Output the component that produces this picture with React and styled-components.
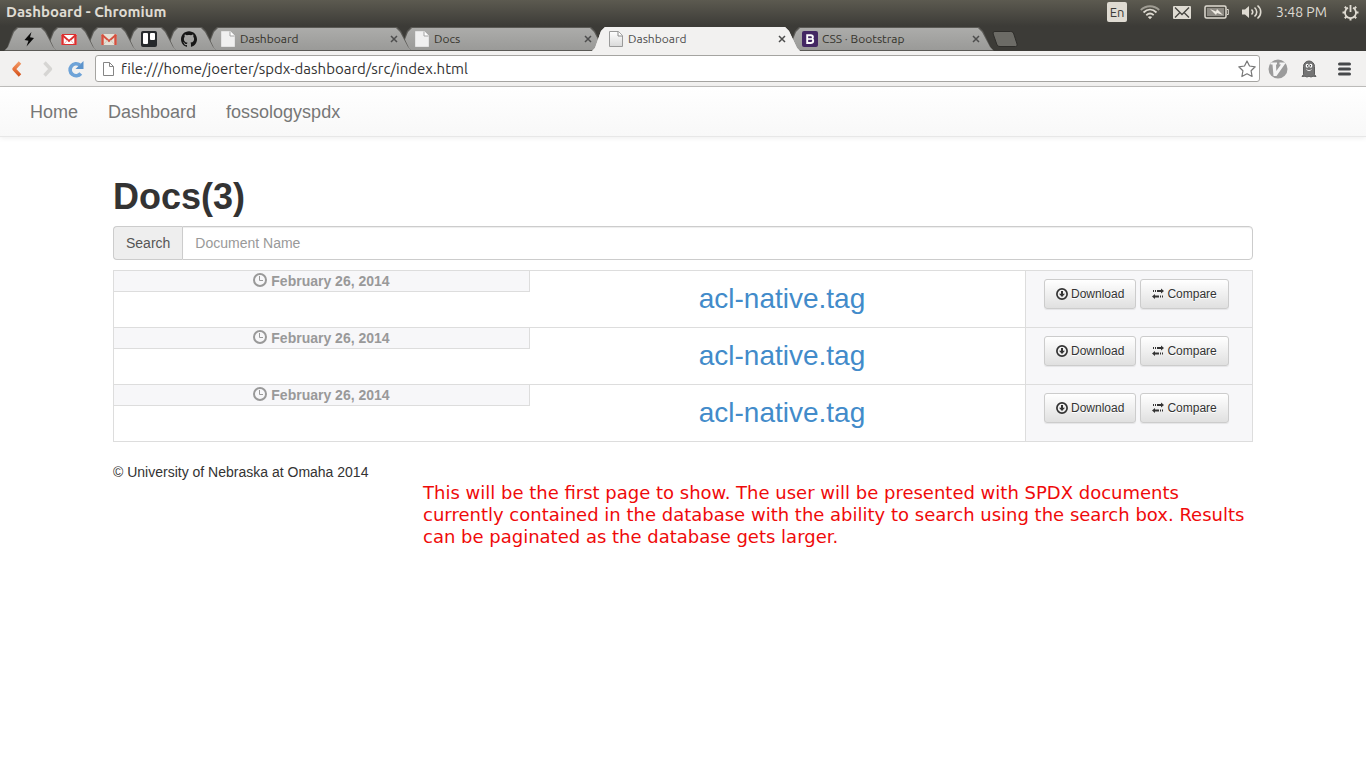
import React from "react";
import styled, { createGlobalStyle, css } from "styled-components";
import { SiGithub } from "react-icons/si";

const chromeFont = `"Ubuntu", "Noto Sans", sans-serif`;
const pageFont = `"Liberation Sans", Arial, sans-serif`;

const GlobalStyle = createGlobalStyle`
  *, *::before, *::after { box-sizing: border-box; }
  body {
    margin: 0;
    background: #fff;
    color: #333;
    font: 14px/20px ${pageFont};
  }
  button, input { font: inherit; margin: 0; }
  svg { display: block; flex: none; }
`;

/* ---------- window chrome ---------- */

const Frame = styled.div`
  background: linear-gradient(#5c5a50 0, #3c3b37 26px, #3c3b37 100%);
  font-family: ${chromeFont};
`;

const TitleBar = styled.header`
  display: flex;
  align-items: center;
  justify-content: space-between;
  height: 24px;
  padding: 0 7px 0 6px;
`;

const WindowTitle = styled.div`
  font-size: 15px;
  font-weight: 700;
  color: #dfdbd2;
`;

const Indicators = styled.div`
  display: flex;
  align-items: center;
  gap: 13px;
  color: #dfdbd2;
`;

const Clock = styled.time`
  min-width: 53px;
  font-size: 14px;
`;

const Keyboard = styled.span`
  width: 20px;
  height: 20px;
  border-radius: 2px;
  background: #dfdbd2;
  color: #3c3b37;
  font-size: 13px;
  line-height: 20px;
  text-align: center;
`;

const TabStrip = styled.nav`
  display: flex;
  height: 27px;
  padding: 3px 0 0 4px;
`;

const tabShape = css`
  clip-path: polygon(
    0 100%, 3px calc(100% - 3px), 9px 4px, 13px 0,
    calc(100% - 15px) 0, calc(100% - 11px) 4px, calc(100% - 3px) calc(100% - 3px), 100% 100%
  );
`;

const Tab = styled.div`
  position: relative;
  z-index: ${(p) => p.$level};
  display: flex;
  align-items: center;
  flex: 0 1 ${(p) => (p.$pinned ? 53 : 208)}px;
  min-width: 53px;
  height: 24px;
  margin-right: ${(p) => (p.$pinned ? -13 : -14)}px;
  padding: 0 14px 0 ${(p) => (p.$pinned ? 17 : 16)}px;

  &::before, &::after {
    content: "";
    position: absolute;
    inset: 0;
    z-index: -1;
    background: ${(p) => (p.$active ? "#f2f1f0" : "#5b5a56")};
    ${tabShape}
  }
  &::after {
    inset: ${(p) => (p.$active ? "0" : "1px")};
    background: ${(p) => (p.$active ? "#f2f1f0" : "linear-gradient(#acacaa, #9a9a98)")};
  }
`;

const TabLink = styled.a`
  display: flex;
  align-items: center;
  gap: 4px;
  flex: 1;
  min-width: 0;
  color: ${(p) => (p.$active ? "#4c4c4c" : "#34322b")};
  font-size: 12px;
  line-height: 16px;
  text-decoration: none;
  white-space: nowrap;
`;

const IconButton = styled.button`
  display: flex;
  align-items: center;
  justify-content: center;
  padding: 0;
  border: 0;
  background: none;
  color: #4d4d4d;
`;

const MenuButton = styled(IconButton)`
  padding-left: 8px;
`;

const NewTab = styled.button`
  align-self: flex-start;
  padding: 0;
  border: 0;
  margin: 4px 0 0 12px;
  background: none;
`;

const Toolbar = styled.div`
  display: flex;
  align-items: center;
  height: 36px;
  padding: 0 15px 0 8px;
  background: #f2f1f0;
  border-bottom: 1px solid #c0bfbd;
`;

const HistoryButtons = styled.div`
  display: flex;
  gap: 12px;
  margin-right: 9px;
`;

const AddressBar = styled.label`
  display: flex;
  align-items: center;
  flex: 1;
  gap: 4px;
  height: 27px;
  padding: 0 3px 0 5px;
  border: 1px solid #a5a4a1;
  border-radius: 3px;
  background: #fff;
`;

const AddressInput = styled.input`
  flex: 1;
  min-width: 0;
  padding: 0;
  border: 0;
  outline: 0;
  background: none;
  color: #333;
  font-family: ${chromeFont};
  font-size: 15px;
  font-variant-ligatures: none;
  line-height: 20px;
`;

const Extensions = styled.div`
  display: flex;
  align-items: center;
  gap: 12px;
  margin-left: 8px;
`;

/* ---------- dashboard page ---------- */

const NavBar = styled.nav`
  display: flex;
  padding: 0 15px;
  border-bottom: 1px solid #e7e7e7;
  background: linear-gradient(#fff, #f8f8f8);
  box-shadow: 0 1px 5px rgba(0, 0, 0, 0.075);
`;

const NavLink = styled.a`
  padding: 15px 15px 14px;
  color: #777;
  font-size: 18px;
  line-height: 20px;
  text-decoration: none;
`;

const Container = styled.main`
  max-width: 1170px;
  margin: 0 auto;
  padding: 40px 15px 20px;
`;

const Heading = styled.h1`
  margin: 0 0 9px;
  font-size: 36px;
  line-height: 40px;
`;

const SearchGroup = styled.div`
  display: flex;
  height: 34px;
  margin-bottom: 10px;
`;

const SearchLabel = styled.label`
  padding: 6px 12px;
  border: 1px solid #ccc;
  border-right: 0;
  border-radius: 4px 0 0 4px;
  background: #eee;
  color: #555;
`;

const SearchInput = styled.input`
  flex: 1;
  min-width: 0;
  padding: 6px 12px;
  border: 1px solid #ccc;
  border-radius: 0 4px 4px 0;
  box-shadow: inset 0 1px 1px rgba(0, 0, 0, 0.075);
  color: #555;
  &::placeholder { color: #999; opacity: 1; }
`;

const DocTable = styled.table`
  width: 100%;
  table-layout: fixed;
  border-collapse: collapse;
  border: 1px solid #ddd;
`;

const DocRow = styled.tr`
  height: 57px;
  border-top: 1px solid #ddd;
`;

const DateCell = styled.td`
  width: 37%;
  padding: 0;
  vertical-align: top;
`;

const DateLabel = styled.div`
  display: flex;
  justify-content: center;
  gap: 4px;
  height: 21px;
  margin-right: 5px;
  border: 1px solid #ddd;
  border-width: 0 1px 1px 0;
  background: #f7f7f9;
  color: #999;
  font-weight: 700;
  svg { margin-top: 2px; }
`;

const NameCell = styled.td`
  padding: 0 0 1px 4px;
  text-align: center;
`;

const DocLink = styled.a`
  color: #428bca;
  font-size: 28px;
  line-height: 32px;
  text-decoration: none;
`;

const ActionCell = styled.td`
  width: 227px;
  padding: 8px 18px;
  border-left: 1px solid #ddd;
  background: #f7f7f9;
  vertical-align: top;
`;

const Actions = styled.div`
  display: flex;
  gap: 4px;
`;

const ActionButton = styled.button`
  display: flex;
  align-items: center;
  gap: 3px;
  height: 30px;
  padding: 0 11px;
  border: 1px solid #ccc;
  border-radius: 3px;
  background: linear-gradient(#fff, #e0e0e0);
  box-shadow: inset 0 1px 0 rgba(255, 255, 255, 0.15), 0 1px 1px rgba(0, 0, 0, 0.075);
  color: #333;
  font-size: 12px;
  line-height: 18px;
  text-shadow: 0 1px 0 #fff;
`;

const Footer = styled.footer`
  margin-top: 20px;
`;

const Note = styled.p`
  margin: 0;
  padding-left: 310px;
  color: #ef0a0a;
  font: 18px/22px "DejaVu Sans", sans-serif;
`;

/* ---------- icons ---------- */

const PageIcon = ({ shaded }) => (
  <svg width="16" height="16" viewBox="0 0 16 16" aria-hidden="true">
    <defs>
      <linearGradient id="sheet" x2="0" y2="1">
        <stop stopColor="#fff" />
        <stop offset="1" stopColor="#d9d9d9" />
      </linearGradient>
    </defs>
    <path d="M1.500.5h9l4 4v11h-13z" fill={shaded ? "url(#sheet)" : "#f0f0f0"} stroke={shaded ? "#9a9a9a" : "#e2e2e2"} />
    <path d="M10 .5v4.500h4.500" fill="#fff" stroke={shaded ? "#8a8a8a" : "#a3a3a3"} />
  </svg>
);

const AddressPageIcon = () => (
  <svg width="16" height="16" viewBox="0 0 16 16" aria-hidden="true">
    <path d="M2.500 1.500h6l4 4v9h-10z" fill="#fff" stroke="#858585" />
    <path d="M8.500 1.500v4h4" fill="none" stroke="#858585" />
  </svg>
);

const BoltIcon = () => (
  <svg width="16" height="16" viewBox="0 0 16 16" aria-hidden="true">
    <path d="M10.500 1 3.500 9l4 .8L5.500 15.500l7.500-8.500-4-.8z" fill="#0b0b0b" />
  </svg>
);

const MailIcon = ({ muted }) => {
  const red = muted ? "#d5503f" : "#dc2f2f";
  return (
    <svg width="16" height="16" viewBox="0 0 16 16" aria-hidden="true">
      <path d="M.5 3h15v11H.5z" fill={muted ? "#e6e1d6" : "#fff"} />
      <path d="M1.500 14V3.500M14.500 14V3.500" stroke={red} strokeWidth="2.400" />
      <path d="m1 3.800 7 6.200 7-6.200" fill="none" stroke={red} strokeWidth="1.900" />
      <path d="m3 13 3.500-4M13 13 9.500 9" stroke={muted ? "#cfc9bb" : "#efb0b0"} />
      {!muted && <path d="M1 13.500h14M1 3.500h14" stroke={red} />}
    </svg>
  );
};

const TrelloIcon = () => (
  <svg width="16" height="16" viewBox="0 0 16 16" aria-hidden="true">
    <rect width="16" height="16" rx="2" fill="#25282b" />
    <rect x="2" y="2" width="5" height="11" rx="1" fill="#fff" />
    <rect x="9" y="2" width="5" height="7" rx="1" fill="#fff" />
  </svg>
);

const BootstrapIcon = () => (
  <svg width="16" height="16" viewBox="0 0 16 16" aria-hidden="true">
    <rect width="16" height="16" rx="2" fill="#432763" />
    <path d="M5.200 4.200h3.500c3 0 2.700 3.400.7 3.700 2.500.3 2.500 4.100-.8 4.100H5.200z" fill="none" stroke="#fff" strokeWidth="1.900" />
    <path d="M5.500 8h4" stroke="#fff" strokeWidth="1.600" />
  </svg>
);

const CloseIcon = () => (
  <svg width="8" height="8" viewBox="0 0 8 8" aria-hidden="true">
    <path d="m1 1 6 6M7 1 1 7" stroke="currentColor" strokeWidth="1.500" />
  </svg>
);

const WifiIcon = () => (
  <svg width="20" height="16" viewBox="0 0 20 16" fill="none" stroke="#dfdbd2" strokeWidth="1.800" aria-hidden="true">
    <path d="M.8 6C6 1 14 1 19.200 6" opacity=".55" />
    <path d="M3.500 8.500c4-3.800 9-3.800 13 0M6.300 11.200c2.500-2.200 5-2.200 7.400 0" />
    <path d="m7.800 13 2.200 2.300 2.200-2.300c-1.300-1-3.100-1-4.400 0z" fill="#dfdbd2" stroke="none" />
  </svg>
);

const EnvelopeIcon = () => (
  <svg width="18" height="13" viewBox="0 0 18 13" aria-hidden="true">
    <rect width="18" height="13" rx="1" fill="#dfdbd2" />
    <path d="m2 1.500 7 7 7-7M2 11.500l4.500-4.500M16 11.500 11.500 7" fill="none" stroke="#44433e" strokeWidth="1.300" />
  </svg>
);

const BatteryIcon = () => (
  <svg width="25" height="14" viewBox="0 0 25 14" aria-hidden="true">
    <rect x="1" y="1" width="21" height="12" rx="1.500" fill="none" stroke="#dfdbd2" strokeWidth="1.500" />
    <path d="M3 3h17v8H3z" fill="#8d8a83" />
    <path d="M23 4.500h1.300v5H23" fill="none" stroke="#dfdbd2" />
    <path d="m6 4 6 2.500L13 4l6 6-6-2-1 2z" fill="#eeeae1" />
  </svg>
);

const VolumeIcon = () => (
  <svg width="21" height="16" viewBox="0 0 21 16" fill="none" stroke="#dfdbd2" strokeWidth="1.600" aria-hidden="true">
    <path d="M0 5.500h3L7 2v12l-4-3.500H0z" fill="#dfdbd2" stroke="none" />
    <path d="M9.500 5.500c1.500 1.500 1.500 3.500 0 5M12.500 3.500c3 2.500 3 6.500 0 9M15.500 1.500c4.300 3.500 4.300 9.500 0 13" />
  </svg>
);

const PowerIcon = () => (
  <svg width="17" height="17" viewBox="0 0 17 17" fill="none" stroke="#dfdbd2" aria-hidden="true">
    <path d="M6 3.700a5.500 5.500 0 1 0 5 0" strokeWidth="1.800" />
    <path d="M8.500 1v7" strokeWidth="1.800" />
    <path d="M.5 8.500H3M14 8.500h2.500M8.500 14v2.500M2.800 2.800l1.800 1.800M14.200 2.800l-1.800 1.800M2.800 14.200l1.800-1.800M14.200 14.200l-1.800-1.800" strokeWidth="2" />
  </svg>
);

const ArrowIcon = ({ forward }) => (
  <svg width="18" height="18" viewBox="0 0 18 18" aria-hidden="true">
    <defs>
      <linearGradient id="ember" gradientUnits="userSpaceOnUse" x1="0" y1="1" x2="0" y2="17">
        <stop stopColor="#f0a070" />
        <stop offset=".5" stopColor="#e8743c" />
        <stop offset="1" stopColor="#cf4f1a" />
      </linearGradient>
    </defs>
    <path
      d={forward ? "m6.500 2.500 6 6.500-6 6.500" : "m12 2.500-6 6.500 6 6.500"}
      fill="none"
      stroke={forward ? "#d6d5d3" : "url(#ember)"}
      strokeWidth="3.400"
      strokeLinejoin="round"
    />
  </svg>
);

const ReloadIcon = () => (
  <svg width="18" height="18" viewBox="0 0 18 18" aria-hidden="true">
    <path d="M12.800 13.500a6 6 0 1 1-1-8.500" fill="none" stroke="#6ea3d8" strokeWidth="3.600" />
    <path d="M15.500 1v8h-8z" fill="#5c93cc" />
  </svg>
);

const StarIcon = () => (
  <svg width="18" height="18" viewBox="0 0 18 18" aria-hidden="true">
    <path d="m9 1 2.500 5 5.700.8-4.100 4 1 5.700L9 13.800l-5.100 2.700 1-5.700-4.100-4L6.500 6z" fill="#fff" stroke="#777" strokeWidth="1.200" strokeLinejoin="round" />
  </svg>
);

const VimIcon = () => (
  <svg width="20" height="20" viewBox="0 0 20 20" aria-hidden="true">
    <circle cx="10" cy="10" r="9.500" fill="#9b9b9b" />
    <path d="M2.500 3.500h6.500v2H8l.3 6.500L13 5.500h-1.500v-2H18L8.500 17H5.500l-1-11.500h-2z" fill="#f4f4f4" />
  </svg>
);

const GhostIcon = () => (
  <svg width="18" height="18" viewBox="0 0 18 18" aria-hidden="true">
    <path d="M3.500 14.500V6.500a5.500 5.500 0 0 1 11 0v8l1.500 2-3-.3-2 .8-2-.8-2 .8-2-.8-3 .3z" fill="#747474" stroke="#5c5c5c" />
    <ellipse cx="7.200" cy="5.800" rx="1.500" ry="2" fill="#fff" />
    <ellipse cx="10.800" cy="5.800" rx="1.500" ry="2" fill="#fff" />
    <path d="M6.500 9.500c1.500 1.500 3.500 1.500 5 0" fill="none" stroke="#e8e8e8" />
    <path d="M7.500 5v1.500M10.500 5v1.500" stroke="#444" />
  </svg>
);

const MenuIcon = () => (
  <svg width="13" height="14" viewBox="0 0 13 14" aria-hidden="true">
    <path d="M1.500 2h10M1.500 7h10M1.500 12h10" stroke="#46484a" strokeWidth="3" strokeLinecap="round" />
  </svg>
);

const ClockIcon = () => (
  <svg width="14" height="14" viewBox="0 0 14 14" fill="none" stroke="#999" aria-hidden="true">
    <circle cx="7" cy="7" r="6" strokeWidth="2" />
    <path d="M6.500 3v4.500H10" />
  </svg>
);

const DownloadIcon = () => (
  <svg width="12" height="12" viewBox="0 0 12 12" aria-hidden="true">
    <circle cx="6" cy="6" r="5.100" fill="none" stroke="#333" strokeWidth="1.700" />
    <path d="M5 3h2v2.700h2L6 9 3 5.700h2z" fill="#333" />
  </svg>
);

const TransferIcon = () => (
  <svg width="12" height="12" viewBox="0 0 12 12" fill="#333" aria-hidden="true">
    <path d="M1 2h1v2H1zM3 2h1v2H3zM5 2h4V.5L12 3 9 5.500V4H5z" />
    <path d="M11 7.500h-1v2h1zM9 7.500H8v2h1zM7 7.500H3V6L0 8.500 3 11V9.500h4z" />
  </svg>
);

/* ---------- data ---------- */

const pinnedTabs = [
  { name: "Feed", icon: <BoltIcon /> },
  { name: "Gmail", icon: <MailIcon /> },
  { name: "Work mail", icon: <MailIcon muted /> },
  { name: "Trello", icon: <TrelloIcon /> },
  { name: "GitHub", icon: <SiGithub size={16} color="#161616" /> },
];

const tabs = [
  { name: "Dashboard", icon: <PageIcon /> },
  { name: "Docs", icon: <PageIcon /> },
  { name: "Dashboard", icon: <PageIcon shaded />, active: true },
  { name: "CSS · Bootstrap", icon: <BootstrapIcon /> },
];

const docs = [
  { id: 1, date: "February 26, 2014", name: "acl-native.tag" },
  { id: 2, date: "February 26, 2014", name: "acl-native.tag" },
  { id: 3, date: "February 26, 2014", name: "acl-native.tag" },
];

function BrowserChrome() {
  return (
    <Frame>
      <TitleBar>
        <WindowTitle>Dashboard - Chromium</WindowTitle>
        <Indicators>
          <Keyboard>En</Keyboard>
          <WifiIcon />
          <EnvelopeIcon />
          <BatteryIcon />
          <VolumeIcon />
          <Clock>3:48 PM</Clock>
          <PowerIcon />
        </Indicators>
      </TitleBar>
      <TabStrip aria-label="Tabs">
        {pinnedTabs.map((tab, i) => (
          <Tab key={tab.name} $pinned $level={10 - i}>
            <TabLink href="#" aria-label={tab.name}>{tab.icon}</TabLink>
          </Tab>
        ))}
        {tabs.map((tab, i) => (
          <Tab key={i} $active={tab.active} $level={tab.active ? 12 : 5 - i}>
            <TabLink href="#" $active={tab.active}>{tab.icon}{tab.name}</TabLink>
            <IconButton aria-label="Close tab"><CloseIcon /></IconButton>
          </Tab>
        ))}
        <NewTab aria-label="New tab">
          <svg width="26" height="16" viewBox="0 0 26 16">
            <path d="M3 .5h15.500c2 0 2.800 1 3.300 2.500l3.200 10c.4 1.500-.2 2.500-1.500 2.500H8c-2 0-2.800-1-3.300-2.500L1.200 3C.8 1.500 1.500.5 3 .5z" fill="#6c6b66" stroke="#2e2d2a" />
          </svg>
        </NewTab>
      </TabStrip>
      <Toolbar>
        <HistoryButtons>
          <IconButton aria-label="Back"><ArrowIcon /></IconButton>
          <IconButton aria-label="Forward"><ArrowIcon forward /></IconButton>
          <IconButton aria-label="Reload"><ReloadIcon /></IconButton>
        </HistoryButtons>
        <AddressBar>
          <AddressPageIcon />
          <AddressInput aria-label="Address" defaultValue="file:///home/joerter/spdx-dashboard/src/index.html" />
          <IconButton aria-label="Bookmark this page"><StarIcon /></IconButton>
        </AddressBar>
        <Extensions>
          <IconButton aria-label="Vim keys"><VimIcon /></IconButton>
          <IconButton aria-label="Ghost"><GhostIcon /></IconButton>
          <MenuButton aria-label="Menu"><MenuIcon /></MenuButton>
        </Extensions>
      </Toolbar>
    </Frame>
  );
}

export default function App() {
  return (
    <>
      <GlobalStyle />
      <BrowserChrome />
      <NavBar>
        <NavLink href="#">Home</NavLink>
        <NavLink href="#">Dashboard</NavLink>
        <NavLink href="#">fossologyspdx</NavLink>
      </NavBar>
      <Container>
        <Heading>Docs(3)</Heading>
        <SearchGroup>
          <SearchLabel htmlFor="doc-search">Search</SearchLabel>
          <SearchInput id="doc-search" type="text" placeholder="Document Name" />
        </SearchGroup>
        <DocTable>
          <tbody>
            {docs.map((doc) => (
              <DocRow key={doc.id}>
                <DateCell>
                  <DateLabel><ClockIcon />{doc.date}</DateLabel>
                </DateCell>
                <NameCell><DocLink href="#">{doc.name}</DocLink></NameCell>
                <ActionCell>
                  <Actions>
                    <ActionButton><DownloadIcon />Download</ActionButton>
                    <ActionButton><TransferIcon />Compare</ActionButton>
                  </Actions>
                </ActionCell>
              </DocRow>
            ))}
          </tbody>
        </DocTable>
        <Footer>© University of Nebraska at Omaha 2014</Footer>
        <Note>
          This will be the first page to show. The user will be presented with SPDX documents
          currently contained in the database with the ability to search using the search box.
          Results can be paginated as the database gets larger.
        </Note>
      </Container>
    </>
  );
}
